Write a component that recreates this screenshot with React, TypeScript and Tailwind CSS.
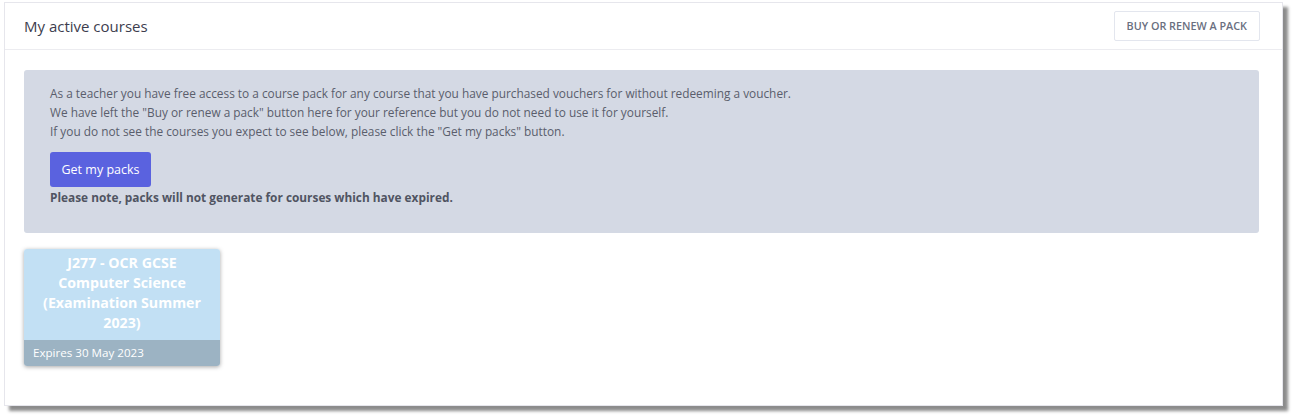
export default function App() {
  return (
    <div className="w-[1292px] h-[416px] bg-white pl-[4px] pt-[2px] font-['Open_Sans',sans-serif]">
      <div className="w-[1279px] h-[404px] bg-white border border-[#e6e6ec] shadow-[5px_5px_3px_rgba(0,0,0,0.45)]">
        <div className="h-[47px] flex items-center justify-between pl-[19px] pr-[22px] border-b border-[#ececf0]">
          <h2 className="text-[15px] text-[#3d3d4e] font-normal">My active courses</h2>
          <button className="h-[30px] px-[12px] border border-[#e3e6ee] rounded-[2px] text-[10.8px] font-semibold text-[#6a6f80] uppercase">
            Buy or renew a pack
          </button>
        </div>
        <div className="pl-[19px] pr-[23px] pt-[20px]">
          <div className="bg-[#d4d9e4] rounded-[3px] px-[26px] pt-[14px] pb-[26px] text-[11.85px] leading-[19px] text-[#5a5e6c]">
            <p>As a teacher you have free access to a course pack for any course that you have purchased vouchers for without redeeming a voucher.</p>
            <p>We have left the "Buy or renew a pack" button here for your reference but you do not need to use it for yourself.</p>
            <p>If you do not see the courses you expect to see below, please click the "Get my packs" button.</p>
            <button className="mt-[11px] h-[35px] w-[101px] bg-[#5a62df] rounded-[3px] text-white text-[12.5px]">
              Get my packs
            </button>
            <p className="mt-[1px] font-bold text-[#505462]">Please note, packs will not generate for courses which have expired.</p>
          </div>
          <div className="mt-[16px] w-[196px] rounded-[3px] overflow-hidden shadow-[0_1px_4px_rgba(0,0,0,0.35)]">
            <div className="h-[91px] bg-[#c2e0f4] flex items-start justify-center pt-[4px] px-[10px] text-center text-white font-bold text-[14.2px] leading-[20px]">
              J277 - OCR GCSE Computer Science (Examination Summer 2023)
            </div>
            <div className="h-[26px] bg-[#9cb3c3] flex items-center px-[9px] text-white text-[11.6px]">
              Expires 30 May 2023
            </div>
          </div>
        </div>
      </div>
    </div>
  );
}
